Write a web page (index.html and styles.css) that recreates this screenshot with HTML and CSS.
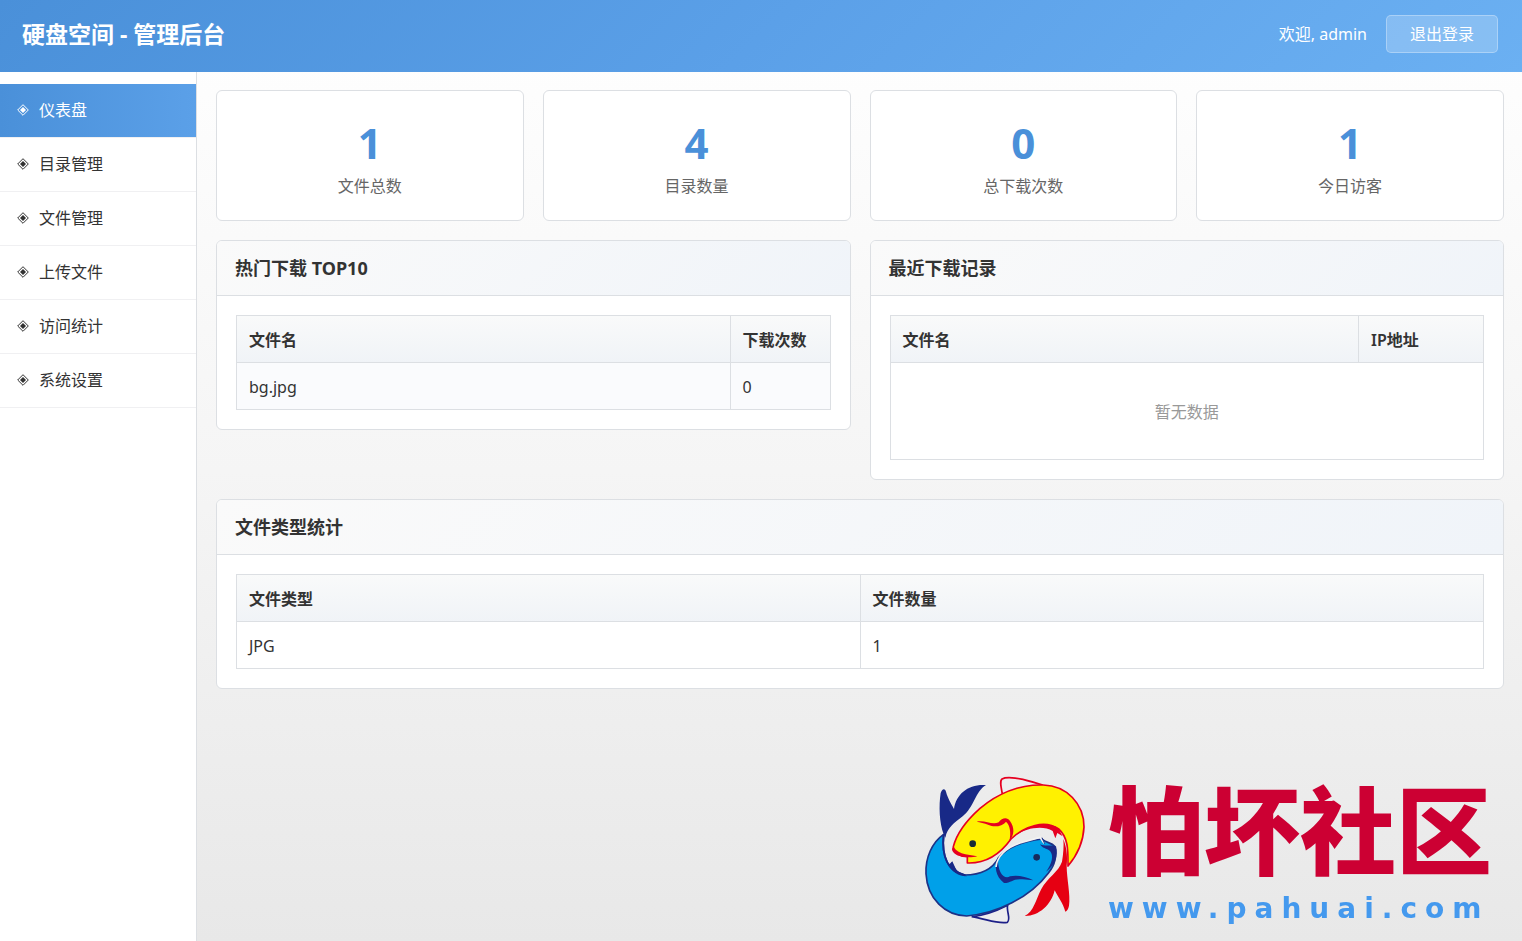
FILE: index.html
```html
<!DOCTYPE html>
<html lang="zh-CN">
<head>
  <meta charset="UTF-8">
  <meta name="viewport" content="width=device-width, initial-scale=1.0">
  <title>硬盘空间 - 管理后台</title>
  <link rel="stylesheet" href="styles.css">
</head>
<body>
  <header class="header">
    <h1>硬盘空间 - 管理后台</h1>
    <div class="user-info">
      <span>欢迎, admin</span>
      <a href="#" class="logout-btn">退出登录</a>
    </div>
  </header>

  <div class="container">
    <nav class="sidebar">
      <a href="#" class="menu-item active"><svg class="menu-icon" viewBox="0 0 12 12"><path d="M6 .7 11.3 6 6 11.3 .7 6Z"/><path class="core" d="M6 3 9 6 6 9 3 6Z"/></svg>仪表盘</a>
      <a href="#" class="menu-item"><svg class="menu-icon" viewBox="0 0 12 12"><path d="M6 .7 11.3 6 6 11.3 .7 6Z"/><path class="core" d="M6 3 9 6 6 9 3 6Z"/></svg>目录管理</a>
      <a href="#" class="menu-item"><svg class="menu-icon" viewBox="0 0 12 12"><path d="M6 .7 11.3 6 6 11.3 .7 6Z"/><path class="core" d="M6 3 9 6 6 9 3 6Z"/></svg>文件管理</a>
      <a href="#" class="menu-item"><svg class="menu-icon" viewBox="0 0 12 12"><path d="M6 .7 11.3 6 6 11.3 .7 6Z"/><path class="core" d="M6 3 9 6 6 9 3 6Z"/></svg>上传文件</a>
      <a href="#" class="menu-item"><svg class="menu-icon" viewBox="0 0 12 12"><path d="M6 .7 11.3 6 6 11.3 .7 6Z"/><path class="core" d="M6 3 9 6 6 9 3 6Z"/></svg>访问统计</a>
      <a href="#" class="menu-item"><svg class="menu-icon" viewBox="0 0 12 12"><path d="M6 .7 11.3 6 6 11.3 .7 6Z"/><path class="core" d="M6 3 9 6 6 9 3 6Z"/></svg>系统设置</a>
    </nav>

    <main class="content">
      <!-- 统计卡片 -->
      <div class="stats">
        <div class="stat-card">
          <div class="stat-number">1</div>
          <div class="stat-label">文件总数</div>
        </div>
        <div class="stat-card">
          <div class="stat-number">4</div>
          <div class="stat-label">目录数量</div>
        </div>
        <div class="stat-card">
          <div class="stat-number">0</div>
          <div class="stat-label">总下载次数</div>
        </div>
        <div class="stat-card">
          <div class="stat-number">1</div>
          <div class="stat-label">今日访客</div>
        </div>
      </div>

      <div class="row">
        <section class="card">
          <h2 class="card-header">热门下载 TOP10</h2>
          <div class="card-body">
            <table class="table striped">
              <thead>
                <tr><th>文件名</th><th class="col-count">下载次数</th></tr>
              </thead>
              <tbody>
                <tr><td>bg.jpg</td><td>0</td></tr>
              </tbody>
            </table>
          </div>
        </section>

        <section class="card">
          <h2 class="card-header">最近下载记录</h2>
          <div class="card-body">
            <table class="table">
              <thead>
                <tr><th>文件名</th><th class="col-ip">IP地址</th></tr>
              </thead>
              <tbody>
                <tr><td colspan="2" class="empty">暂无数据</td></tr>
              </tbody>
            </table>
          </div>
        </section>
      </div>

      <section class="card">
        <h2 class="card-header">文件类型统计</h2>
        <div class="card-body">
          <table class="table">
            <thead>
              <tr><th class="col-half">文件类型</th><th>文件数量</th></tr>
            </thead>
            <tbody>
              <tr><td>JPG</td><td>1</td></tr>
            </tbody>
          </table>
        </div>
      </section>
    </main>
  </div>

  <!-- 右下角水印 -->
  <div class="watermark">
    <svg class="fish" viewBox="0 0 570 510">
      <!-- 黄鱼 -->
      <path d="M278 92 C274 70 268 48 276 42 C290 34 330 38 398 60" fill="#eeedee" stroke="#e60020" stroke-width="5"/>
      <path d="M172 274 C150 276 130 262 130 245 C140 205 172 164 210 130 C265 84 325 58 400 60 C470 62 522 116 522 186 C520 230 502 270 474 303 C474 260 476 218 446 192 C405 164 345 182 303 222 C270 268 225 296 172 294 Z" fill="#fff100" stroke="#e60020" stroke-width="5" stroke-linejoin="round"/>
      <path d="M130 246 C140 258 150 264 166 268 L202 274 C180 280 142 278 130 262 C124 254 126 248 130 246Z" fill="#e60020"/>
      <path d="M200 170 C225 164 246 182 266 172 C276 158 292 156 300 168 C314 188 314 210 298 228 C304 204 300 180 288 170 C278 184 252 188 236 180 C222 174 210 172 200 170Z" fill="#e60020"/>
      <path d="M318 210 C360 172 430 172 446 192 L458 214 L442 204 L436 220 L428 198 C400 180 350 188 318 210Z" fill="#e60020"/>
      <path d="M460 222 C468 242 474 272 470 302 C470 340 482 390 477 422 C475 432 471 438 466 440 C459 414 444 396 434 376 C424 420 386 454 344 453 C372 440 376 406 394 372 C412 338 446 320 456 290 C460 268 462 242 460 222Z" fill="#e60012"/>
      <circle cx="188" cy="236" r="10" fill="#172a36"/>
      <!-- 蓝鱼 -->
      <path d="M293 421 C288 438 304 462 292 472 C262 478 230 462 185 455 C226 452 260 438 293 421Z" fill="#eeedee" stroke="#1d2088" stroke-width="5"/>
      <path d="M101 208 C66 232 46 278 48 326 C52 402 106 452 170 453 C260 446 360 398 416 323 C434 302 442 272 434 244 C424 232 408 234 396 222 C344 228 294 246 266 278 C248 312 212 330 164 330 C112 318 94 274 101 208Z" fill="#00a0e9" stroke="#1d3286" stroke-width="5" stroke-linejoin="round"/>
      <path d="M101 208 C88 174 86 122 92 84 C96 72 104 68 108 80 C114 102 124 116 132 132 C138 86 176 56 228 60 C196 78 192 128 158 154 C132 174 112 188 106 218Z" fill="#182987"/>
      <path d="M101 208 C94 274 114 320 166 331 L138 320 L126 294 L118 302" fill="none" stroke="#182987" stroke-width="6"/>
      <path d="M120 300 L126 291 C134 314 150 326 172 334 C144 334 126 320 112 298Z" fill="#182987"/>
      <path d="M264 276 C252 304 256 334 282 354 C306 354 306 340 338 343 L370 346 C346 334 322 330 300 334 C284 344 262 326 264 276Z" fill="#182987"/>
      <path d="M390 238 C410 246 420 238 438 244 C446 272 434 302 408 320 C426 296 432 272 420 258 C410 250 396 250 390 238Z" fill="#182987"/>
      <circle cx="380" cy="277" r="10" fill="#172a5c"/>
      <!-- 两鱼之间的留白 -->
      <path d="M258 306 C260 276 288 248 330 234 L390 217 L402 235" fill="none" stroke="#f2f2f2" stroke-width="5"/>
      <path d="M396 218 L404 236" fill="none" stroke="#1d3286" stroke-width="3"/>
    </svg>
    <div class="watermark-text">
      <div class="watermark-name">怕坏社区</div>
      <div class="watermark-url">www.pahuai.com</div>
    </div>
  </div>
</body>
</html>
```
FILE: styles.css
```css
* {
  margin: 0;
  padding: 0;
  box-sizing: border-box;
}
body {
  font-family: "Noto Sans", "Noto Sans CJK SC", sans-serif;
  font-size: 16px;
  line-height: 24px;
  color: #333;
  min-height: 100vh;
  display: flex;
  flex-direction: column;
  background: linear-gradient(180deg, #ffffff 0%, #f5f5f5 50%, #e8e8e8 100%);
}
a {
  color: inherit;
  text-decoration: none;
}
/* 顶部 */
.header {
  height: 72px;
  padding: 0 24px 4px 22px;
  display: flex;
  justify-content: space-between;
  align-items: center;
  color: #fff;
  background: linear-gradient(135deg, #4a90d9 0%, #5ba0e8 50%, #6bb0f2 100%);
}
.header h1 {
  font-size: 23px;
  line-height: 32px;
  font-weight: 700;
}
.user-info {
  display: flex;
  align-items: center;
  gap: 19px;
}
.logout-btn {
  padding: 6px 23px;
  border: 1px solid rgba(255, 255, 255, 0.3);
  border-radius: 5px;
  background: rgba(255, 255, 255, 0.2);
}
.logout-btn:hover {
  background: rgba(255, 255, 255, 0.3);
}
.container {
  flex: 1;
  display: flex;
}
/* 侧边栏 */
.sidebar {
  width: 197px;
  flex-shrink: 0;
  padding-top: 12px;
  background: #fff;
  border-right: 1px solid #dcdfe3;
}
.menu-item {
  display: flex;
  align-items: center;
  gap: 10px;
  height: 54px;
  padding: 0 17px 1px;
  border-bottom: 1px solid #f0f0f2;
}
.menu-item.active {
  color: #fff;
  background: linear-gradient(90deg, #4a90d9 0%, #5ba0e8 100%);
}
.menu-icon {
  width: 12px;
  height: 12px;
  fill: none;
  stroke: currentColor;
}
.menu-icon .core {
  fill: currentColor;
  stroke: none;
}
/* 内容区 */
.content {
  flex: 1;
  min-width: 0;
  padding: 18px 18px 18px 19px;
  display: flex;
  flex-direction: column;
  gap: 19px;
}
.stats {
  display: grid;
  grid-template-columns: repeat(4, 1fr);
  gap: 19px;
}
.stat-card {
  padding: 28px 18px 22px;
  text-align: center;
  background: #fff;
  border: 1px solid #dcdfe3;
  border-radius: 6px;
}
.stat-number {
  font-size: 42px;
  line-height: 48px;
  font-weight: 700;
  color: #4a90d9;
  margin-bottom: 7px;
}
.stat-label {
  color: #666;
}
.row {
  display: grid;
  grid-template-columns: 1fr 1fr;
  align-items: start;
  gap: 19px;
}
.card {
  background: #fff;
  border: 1px solid #dcdfe3;
  border-radius: 6px;
  overflow: hidden;
}
.card-header {
  padding: 14px 18px;
  font-size: 18px;
  line-height: 26px;
  font-weight: 700;
  background: linear-gradient(135deg, #fafafa 0%, #f0f4f9 100%);
  border-bottom: 1px solid #dcdfe3;
}
.card-body {
  padding: 19px;
}
.table {
  width: 100%;
  border-collapse: collapse;
}
.table th,
.table td {
  padding: 12px 12px 10px;
  text-align: left;
  border: 1px solid #dcdfe3;
}
.table th {
  font-weight: 600;
}
.table thead tr {
  background: linear-gradient(180deg, #f9fafa 0%, #f0f3f7 100%);
}
.table.striped tbody tr {
  background: #fafbfd;
}
.table .col-count {
  width: 100px;
}
.table .col-ip {
  width: 125px;
}
.table .col-half {
  width: 50%;
}
.table .empty {
  padding: 37px 12px 35px;
  text-align: center;
  color: #999;
}
/* 水印 */
.watermark {
  position: fixed;
  right: 30px;
  bottom: 6px;
  display: flex;
  align-items: flex-end;
  gap: 8px;
  pointer-events: none;
}
.fish {
  width: 190px;
  height: 170px;
}
.watermark-text {
  display: flex;
  flex-direction: column;
  gap: 11px;
  padding-bottom: 8px;
}
.watermark-name {
  font-family: "Noto Sans CJK SC", sans-serif;
  font-size: 96px;
  line-height: 108px;
  font-weight: 900;
  color: #cc0033;
}
.watermark-url {
  font-family: "DejaVu Sans", sans-serif;
  font-size: 28px;
  line-height: 36px;
  font-weight: 700;
  letter-spacing: 8px;
  color: #4499ee;
}
```
